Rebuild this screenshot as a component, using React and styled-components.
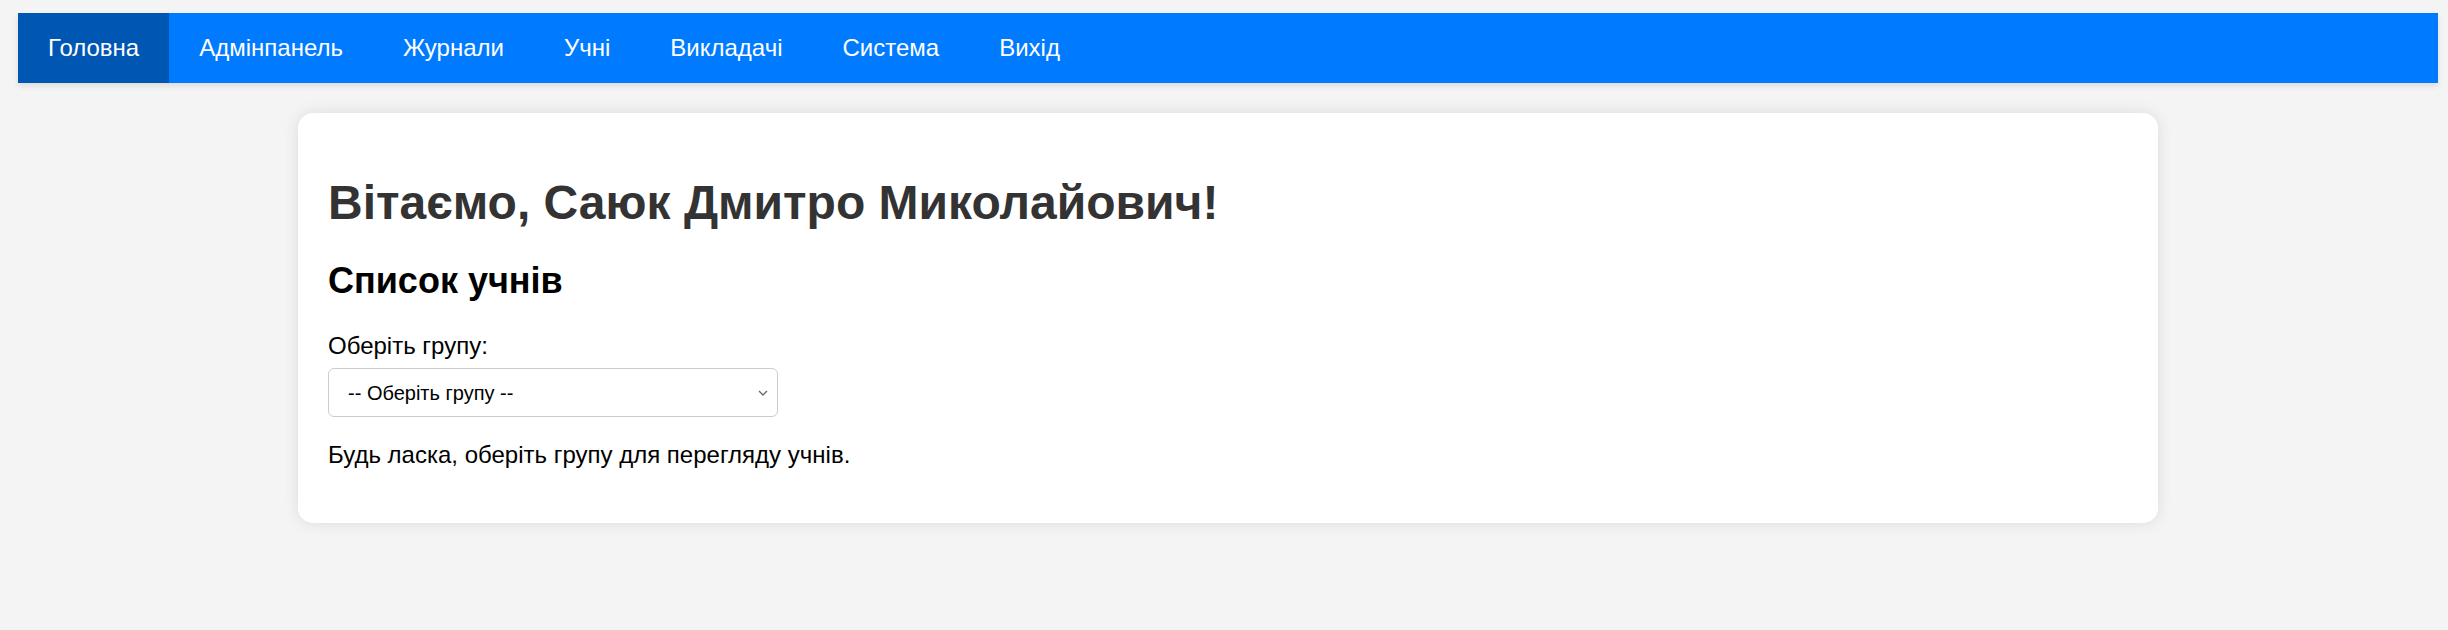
import React from "react";
import styled, { createGlobalStyle } from "styled-components";

const GlobalStyle = createGlobalStyle`
  html, body {
    margin: 0;
    padding: 0;
    background: #f4f4f4;
    font-family: "Liberation Sans", Arial, sans-serif;
  }
  * { box-sizing: border-box; }
`;

const Page = styled.div`
  padding: 13px 10px 40px 18px;
`;

const NavBar = styled.nav`
  display: flex;
  background: #007bff;
  box-shadow: 0 3px 6px rgba(0, 0, 0, 0.1);
`;

const NavItem = styled.a`
  display: block;
  padding: 21px 30px;
  line-height: 28px;
  font-size: 24px;
  color: #fff;
  text-decoration: none;
  background: ${(p) => (p.$active ? "#0056b3" : "transparent")};
`;

const Card = styled.main`
  max-width: 1860px;
  margin: 30px auto 0;
  padding: 30px;
  background: #fff;
  border-radius: 15px;
  box-shadow: 0 0 15px rgba(0, 0, 0, 0.1);
`;

const Title = styled.h1`
  margin: 32px 0 30px;
  font-size: 48px;
  line-height: 55px;
  font-weight: bold;
  color: #333;
`;

const Subtitle = styled.h2`
  margin: 30px 0 31px;
  font-size: 36px;
  line-height: 41px;
  font-weight: bold;
  color: #000;
`;

const Label = styled.label`
  display: block;
  margin-bottom: 8px;
  font-size: 24px;
  line-height: 28px;
  color: #000;
`;

const SelectWrap = styled.div`
  position: relative;
  width: 450px;
`;

const Select = styled.select`
  display: block;
  width: 100%;
  height: 49px;
  padding: 0 30px 0 19px;
  font-family: "Liberation Sans", Arial, sans-serif;
  font-size: 20px;
  color: #000;
  background: #fff;
  border: 1px solid #ccc;
  border-radius: 6px;
  appearance: none;
  -webkit-appearance: none;
  outline: none;
`;

const Chevron = styled.svg`
  position: absolute;
  right: 10px;
  top: 50%;
  margin-top: -3px;
  width: 10px;
  height: 6px;
  pointer-events: none;
`;

const Message = styled.p`
  margin: 24px 0;
  font-size: 24px;
  line-height: 28px;
  color: #000;
`;

const navItems = ["Головна", "Адмінпанель", "Журнали", "Учні", "Викладачі", "Система", "Вихід"];

export default function App() {
  return (
    <>
      <GlobalStyle />
      <Page>
        <NavBar>
          {navItems.map((item, i) => (
            <NavItem key={item} href="#" $active={i === 0}>
              {item}
            </NavItem>
          ))}
        </NavBar>
        <Card>
          <Title>Вітаємо, Саюк Дмитро Миколайович!</Title>
          <Subtitle>Список учнів</Subtitle>
          <Label htmlFor="group">Оберіть групу:</Label>
          <SelectWrap>
            <Select id="group" defaultValue="">
              <option value="">-- Оберіть групу --</option>
            </Select>
            <Chevron viewBox="0 0 10 6">
              <path d="M1 1 L5 5 L9 1" fill="none" stroke="#6b6b6b" strokeWidth="1.4" />
            </Chevron>
          </SelectWrap>
          <Message>Будь ласка, оберіть групу для перегляду учнів.</Message>
        </Card>
      </Page>
    </>
  );
}
